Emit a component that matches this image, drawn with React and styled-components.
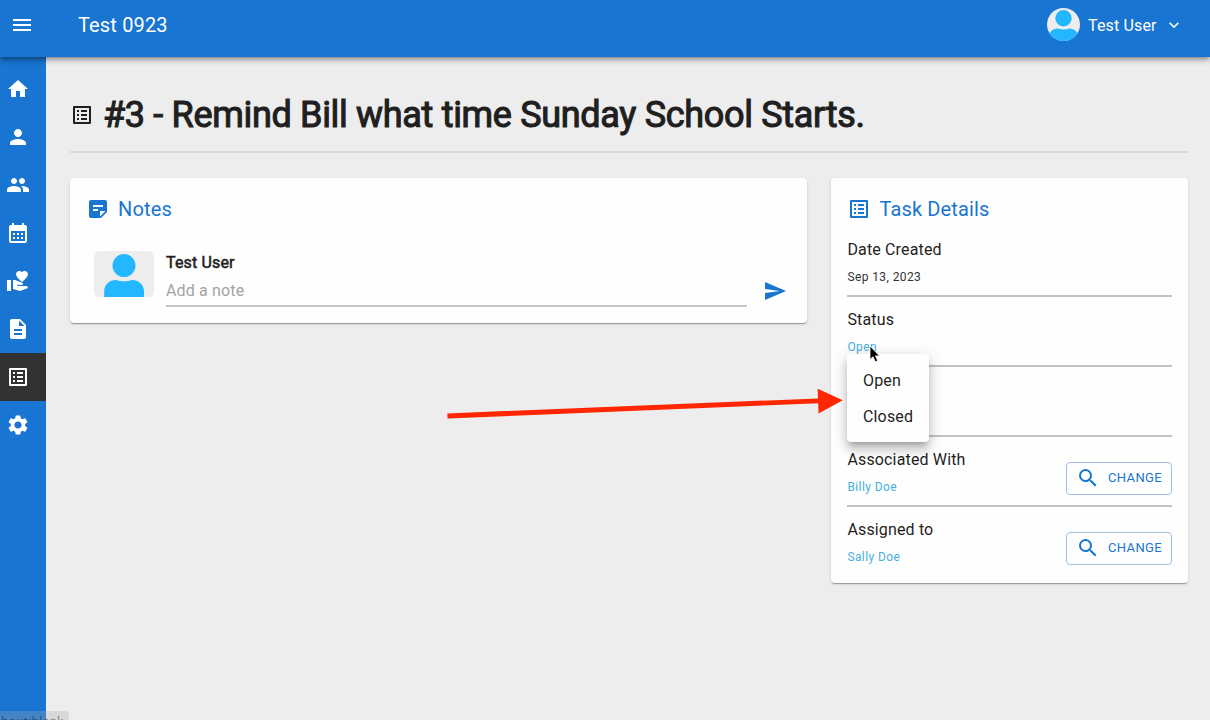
import React from "react";
import styled, { createGlobalStyle } from "styled-components";
import {
  MdMenu, MdHome, MdPerson, MdPeople, MdCalendarMonth, MdVolunteerActivism,
  MdDescription, MdListAlt, MdSettings, MdStickyNote2, MdSend, MdSearch, MdExpandMore,
} from "react-icons/md";

const BLUE = "#1875d2";
const INK = "#1f1f1f";

const GlobalStyle = createGlobalStyle`
  * { box-sizing: border-box; }
  body {
    margin: 0;
    overflow: hidden;
    background: #ededed;
    color: ${INK};
    font-family: Roboto, "Liberation Sans", sans-serif;
  }
  svg { display: block; flex: none; }
`;

const Page = styled.div`
  position: relative;
  display: flex;
  flex-direction: column;
  width: 1210px;
  height: 720px;
  overflow: hidden;
`;

const TopBar = styled.header`
  position: relative;
  z-index: 2;
  display: flex;
  align-items: center;
  flex: none;
  height: 57px;
  padding: 0 26px 7px 10px;
  background: ${BLUE};
  color: #fff;
  box-shadow: 0 2px 4px -1px rgba(0, 0, 0, 0.3), 0 4px 5px rgba(0, 0, 0, 0.16), 0 1px 10px rgba(0, 0, 0, 0.12);
`;

const AppName = styled.div`
  flex: 1;
  margin-left: 44px;
  font-size: 20px;
  line-height: 24px;
  letter-spacing: 0.15px;
`;

const UserMenu = styled.div`
  display: flex;
  align-items: center;
  font-size: 16px;
  letter-spacing: 0.15px;
`;

const UserName = styled.span`
  width: 76px;
  margin-left: 8px;
`;

const AvatarFrame = styled.div`
  flex: none;
  overflow: hidden;
  background: #ededed;
  width: ${(p) => (p.$round ? 33 : 60)}px;
  height: ${(p) => (p.$round ? 33 : 46)}px;
  margin-top: ${(p) => (p.$round ? -1 : 0.5)}px;
  border-radius: ${(p) => (p.$round ? "50%" : "5px")};
`;

const Body = styled.div`
  display: flex;
  flex: 1;
`;

const SideNav = styled.nav`
  flex: none;
  width: 46px;
  padding-top: 8px;
  background: ${BLUE};
`;

const NavItem = styled.a`
  display: flex;
  align-items: center;
  height: 48px;
  padding-left: 6px;
  color: #fff;
  background: ${(p) => (p.$active ? "#323232" : "transparent")};
`;

const Main = styled.main`
  flex: 1;
  padding: 33px 22px 0 24px;
`;

const PageTitle = styled.div`
  display: flex;
  align-items: center;
  gap: 9px;
  height: 63px;
  padding-bottom: 11px;
  border-bottom: 2px solid #dbdbdb;
`;

const Heading = styled.h1`
  margin: 0;
  font-size: 36px;
  font-weight: 400;
  line-height: 44px;
  letter-spacing: -0.32px;
  white-space: nowrap;
  -webkit-text-stroke: 1.1px ${INK};
`;

const Columns = styled.div`
  display: flex;
  align-items: flex-start;
  gap: 24px;
  margin-top: 25px;
`;

const Card = styled.section`
  flex: ${(p) => (p.$width ? "none" : "1")};
  width: ${(p) => (p.$width ? p.$width + "px" : "auto")};
  height: ${(p) => p.$height}px;
  padding: 19px 16px 0;
  background: #fefefe;
  border-radius: 4px;
  box-shadow: 0 2px 1px -1px rgba(0, 0, 0, 0.2), 0 1px 1px rgba(0, 0, 0, 0.14), 0 1px 3px rgba(0, 0, 0, 0.12);
`;

const CardTitle = styled.h2`
  display: flex;
  align-items: center;
  gap: 8px;
  height: 24px;
  margin: 0;
  color: ${BLUE};
  font-size: 20px;
  font-weight: 400;
  letter-spacing: 0.15px;
`;

const NoteForm = styled.div`
  display: flex;
  margin: 29px 4px 0 8px;
`;

const NoteFields = styled.div`
  flex: 1;
  margin: 0 16px 0 12px;
  padding-top: 1px;
`;

const Author = styled.div`
  font-size: 16px;
  line-height: 24px;
  letter-spacing: 0.15px;
  -webkit-text-stroke: 0.55px ${INK};
`;

const NoteInput = styled.div`
  height: 32px;
  padding-top: 4px;
  border-bottom: 2px solid #c6c6c6;
  color: #a3a3a3;
  font-size: 16px;
  line-height: 24px;
  letter-spacing: 0.15px;
`;

const SendButton = styled.span`
  padding-top: 28.5px;
  color: ${BLUE};
`;

const DetailList = styled.div`
  margin-top: 6px;
`;

const Detail = styled.div`
  display: flex;
  align-items: flex-start;
  justify-content: space-between;
  height: 70px;
  border-bottom: ${(p) => (p.$last ? "none" : "2px solid #c3c3c3")};
`;

const DetailText = styled.div`
  padding-top: 9px;
`;

const DetailLabel = styled.div`
  font-size: 16px;
  line-height: 27px;
  letter-spacing: 0.15px;
`;

const DetailValue = styled.div`
  font-size: 12px;
  line-height: 28px;
  letter-spacing: 0.4px;
  color: ${(p) => (p.$link ? "#46b0df" : "#333")};
`;

const ChangeButton = styled.button`
  display: flex;
  align-items: center;
  gap: 8px;
  width: 106px;
  height: 33px;
  margin-top: 25px;
  padding: 0 0 1px 9px;
  border: 1px solid #9dc2e8;
  border-radius: 4px;
  background: transparent;
  color: ${BLUE};
  font: 400 13px/22px Roboto, sans-serif;
  letter-spacing: 0.37px;
`;

const StatusMenu = styled.div`
  position: absolute;
  z-index: 3;
  left: 847px;
  top: 354px;
  width: 82px;
  padding: 8px 0;
  border-radius: 4px;
  background: #fefefe;
  box-shadow: 0 5px 5px -3px rgba(0, 0, 0, 0.2), 0 8px 10px 1px rgba(0, 0, 0, 0.14), 0 3px 14px 2px rgba(0, 0, 0, 0.12);
`;

const MenuItem = styled.div`
  height: 36px;
  padding: 1px 0 0 16px;
  font-size: 16px;
  line-height: 35px;
  letter-spacing: 0.15px;
`;

const Annotation = styled.svg`
  position: absolute;
  z-index: 4;
  left: 440px;
  top: 340px;
  pointer-events: none;
`;

const LinkStatus = styled.div`
  position: absolute;
  z-index: 5;
  left: -6px;
  top: 711px;
  width: 75px;
  height: 20px;
  padding: 3px 0 0 0;
  border-radius: 4px;
  background: rgba(170, 170, 170, 0.3);
  color: rgba(0, 0, 0, 0.4);
  font-size: 13px;
  line-height: 15px;
  letter-spacing: 0.2px;
`;

function Avatar({ round }) {
  return (
    <AvatarFrame $round={round}>
      {round ? (
        <svg width="33" height="33" viewBox="0 0 33 33" fill="#22b7ff">
          <circle cx="16.5" cy="10.3" r="8.2" />
          <path d="M2 33V28Q3 20.5 11 20.5Q16.5 22.5 22 20.5Q30 20.5 31 28V33Z" />
        </svg>
      ) : (
        <svg width="60" height="46" viewBox="0 0 60 46" fill="#22b7ff">
          <circle cx="30" cy="14.6" r="11.5" />
          <path d="M10.2 46V40.5C10.2 33.5 15.5 29 22 29C27 30.8 33 30.8 38 29C44.5 29 50 33.5 50 40.5V46Z" />
        </svg>
      )}
    </AvatarFrame>
  );
}

const NAV = [
  ["Home", MdHome], ["Person", MdPerson], ["People", MdPeople], ["Calendar", MdCalendarMonth],
  ["Giving", MdVolunteerActivism], ["Forms", MdDescription], ["Tasks", MdListAlt], ["Settings", MdSettings],
];

const DETAILS = [
  { label: "Date Created", value: "Sep 13, 2023" },
  { label: "Status", value: "Open", link: true },
  {},
  { label: "Associated With", value: "Billy Doe", link: true, change: true },
  { label: "Assigned to", value: "Sally Doe", link: true, change: true },
];

export default function App() {
  return (
    <Page>
      <GlobalStyle />
      <TopBar>
        <MdMenu size={24} />
        <AppName>Test 0923</AppName>
        <UserMenu>
          <Avatar round />
          <UserName>Test User</UserName>
          <MdExpandMore size={20} />
        </UserMenu>
      </TopBar>
      <Body>
        <SideNav>
          {NAV.map(([name, Icon]) => (
            <NavItem key={name} $active={name === "Tasks"}><Icon size={24} /></NavItem>
          ))}
        </SideNav>
        <Main>
          <PageTitle>
            <MdListAlt size={24} />
            <Heading>#3 - Remind Bill what time Sunday School Starts.</Heading>
          </PageTitle>
          <Columns>
            <Card $height={144.5}>
              <CardTitle><MdStickyNote2 size={24} />Notes</CardTitle>
              <NoteForm>
                <Avatar />
                <NoteFields>
                  <Author>Test User</Author>
                  <NoteInput>Add a note</NoteInput>
                </NoteFields>
                <SendButton><MdSend size={24} /></SendButton>
              </NoteForm>
            </Card>
            <Card $width={356.6} $height={405}>
              <CardTitle><MdListAlt size={24} />Task Details</CardTitle>
              <DetailList>
                {DETAILS.map(({ label, value, link, change }, i) => (
                  <Detail key={i} $last={i === DETAILS.length - 1}>
                    {label && (
                      <DetailText>
                        <DetailLabel>{label}</DetailLabel>
                        <DetailValue $link={link}>{value}</DetailValue>
                      </DetailText>
                    )}
                    {change && <ChangeButton><MdSearch size={24} />CHANGE</ChangeButton>}
                  </Detail>
                ))}
              </DetailList>
            </Card>
          </Columns>
        </Main>
      </Body>
      <StatusMenu>
        <MenuItem>Open</MenuItem>
        <MenuItem>Closed</MenuItem>
      </StatusMenu>
      <Annotation width="450" height="90" viewBox="440 340 450 90">
        <path d="M447.3 413.4L818 398.4L817.7 388.8L842.8 400.2L818.5 413.4L818.2 403.2L447.6 418.6Z" fill="#ff2600" />
        <path d="M870 346V359.5L873 356.8L875.3 361.8L877.7 360.7L875.5 355.9H879.5Z" fill="#000" stroke="#fff" strokeWidth="0.8" />
      </Annotation>
      <LinkStatus>about:blank</LinkStatus>
    </Page>
  );
}
